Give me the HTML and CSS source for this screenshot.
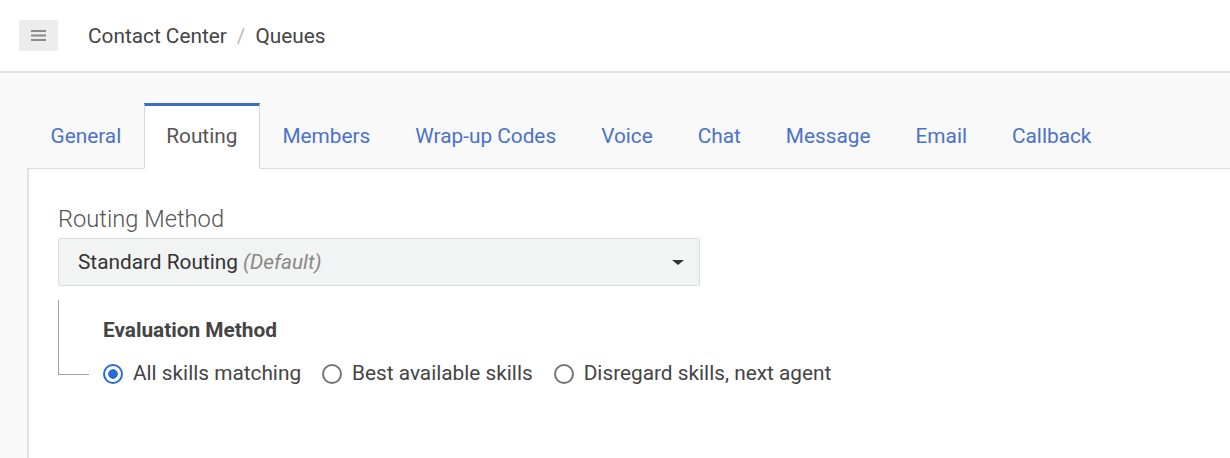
FILE: index.html
```html
<!DOCTYPE html>
<html lang="en">
<head>
<meta charset="utf-8">
<title>Queues</title>
<link rel="stylesheet" href="styles.css">
</head>
<body>
<header class="topbar">
  <button class="menu-btn" aria-label="Menu">
    <svg width="15" height="11" viewBox="0 0 15 11"><rect x="0" y="0" width="15" height="2" fill="#8a8a8a"/><rect x="0" y="4.5" width="15" height="2" fill="#8a8a8a"/><rect x="0" y="9" width="15" height="2" fill="#8a8a8a"/></svg>
  </button>
  <nav class="crumbs">
    <span>Contact Center</span><span class="sep">/</span><span>Queues</span>
  </nav>
</header>
<main class="page">
  <ul class="tabs">
    <li class="tab">General</li>
    <li class="tab active">Routing</li>
    <li class="tab">Members</li>
    <li class="tab">Wrap-up Codes</li>
    <li class="tab">Voice</li>
    <li class="tab">Chat</li>
    <li class="tab">Message</li>
    <li class="tab">Email</li>
    <li class="tab">Callback</li>
  </ul>
  <section class="panel">
    <div class="field-label">Routing Method</div>
    <div class="select">
      <span class="select-value">Standard Routing <em>(Default)</em></span>
      <span class="caret"></span>
    </div>
    <div class="eval">
      <div class="eval-title">Evaluation Method</div>
      <div class="radios">
        <label class="radio"><span class="dot checked"></span>All skills matching</label>
        <label class="radio"><span class="dot"></span>Best available skills</label>
        <label class="radio"><span class="dot"></span>Disregard skills, next agent</label>
      </div>
    </div>
  </section>
</main>
</body>
</html>
```

FILE: styles.css
```css
* { box-sizing: border-box; }
html, body { margin: 0; padding: 0; height: 100%; }
body {
  font-family: Roboto, "Liberation Sans", Arial, sans-serif;
  background: #f9f9fa;
  color: #444;
  overflow: hidden;
}
.topbar {
  height: 73px;
  background: #fff;
  border-bottom: 2px solid #e2e2e2;
  display: flex;
  align-items: center;
  padding-left: 19px;
}
.menu-btn {
  width: 39px;
  height: 31px;
  border: none;
  border-radius: 2px;
  background: #ececec;
  display: flex;
  align-items: center;
  justify-content: center;
  padding: 0;
}
.crumbs {
  margin-left: 30px;
  font-size: 20.8px;
  color: #444;
  display: flex;
  align-items: center;
}
.crumbs .sep { color: #bbb; margin: 0 10px; }
.page {
  padding: 30px 0 0 27px;
  height: calc(100% - 73px);
  display: flex;
  flex-direction: column;
}
.tabs {
  list-style: none;
  margin: 0;
  padding: 0;
  display: flex;
  border-bottom: 1px solid #dcdcdc;
  height: 66px;
}
.tab {
  padding: 0 21.5px 2px;
  font-size: 20.8px;
  color: #4a72c8;
  display: flex;
  align-items: center;
  border: 1px solid transparent;
  border-top: 3px solid transparent;
}
.tab:first-child { padding-left: 22.5px; }
.tab.active {
  background: #fff;
  color: #555;
  border-color: #d6d6d6;
  border-top-color: #3b6cc6;
  border-bottom: 1px solid #fff;
  margin-bottom: -1px;
  height: 66px;
}
.panel {
  flex: 1;
  background: #fff;
  border-left: 2px solid #e2e2e2;
  padding: 36px 0 0 29px;
}
.field-label {
  font-size: 23.7px;
  color: #555;
  font-weight: 300;
  line-height: 28px;
}
.select {
  margin-top: 5px;
  width: 642px;
  height: 48px;
  background: #f2f3f3;
  border: 1px solid #dadcdc;
  border-radius: 2px;
  display: flex;
  align-items: center;
  justify-content: space-between;
  padding: 0 15px 0 19px;
}
.select-value { font-size: 20.8px; color: #333; }
.select-value em { color: #888; }
.caret {
  width: 0; height: 0;
  border-left: 6px solid transparent;
  border-right: 6px solid transparent;
  border-top: 5px solid #333;
}
.eval {
  margin-top: 14px;
  border-left: 1px solid #a0a4a8;
  padding: 18px 0 0 44px;
  height: 75px;
  position: relative;
}
.eval::after {
  content: "";
  position: absolute;
  left: 0;
  top: 74px;
  width: 30px;
  border-bottom: 1px solid #a0a4a8;
}
.eval-title {
  font-size: 20.8px;
  font-weight: 700;
  color: #444;
  line-height: 25px;
}
.radios {
  display: flex;
  gap: 21px;
  margin-top: 18px;
  align-items: center;
  height: 25px;
}
.radio {
  display: flex;
  align-items: center;
  font-size: 20.8px;
  color: #444;
  line-height: 25px;
}
.dot {
  width: 20px;
  height: 20px;
  border-radius: 50%;
  border: 2px solid #757575;
  margin-right: 10px;
  display: inline-block;
}
.dot.checked {
  border-color: #2a6bd9;
  background: radial-gradient(circle, #2a6bd9 0 4.5px, #fff 5px);
}
```
